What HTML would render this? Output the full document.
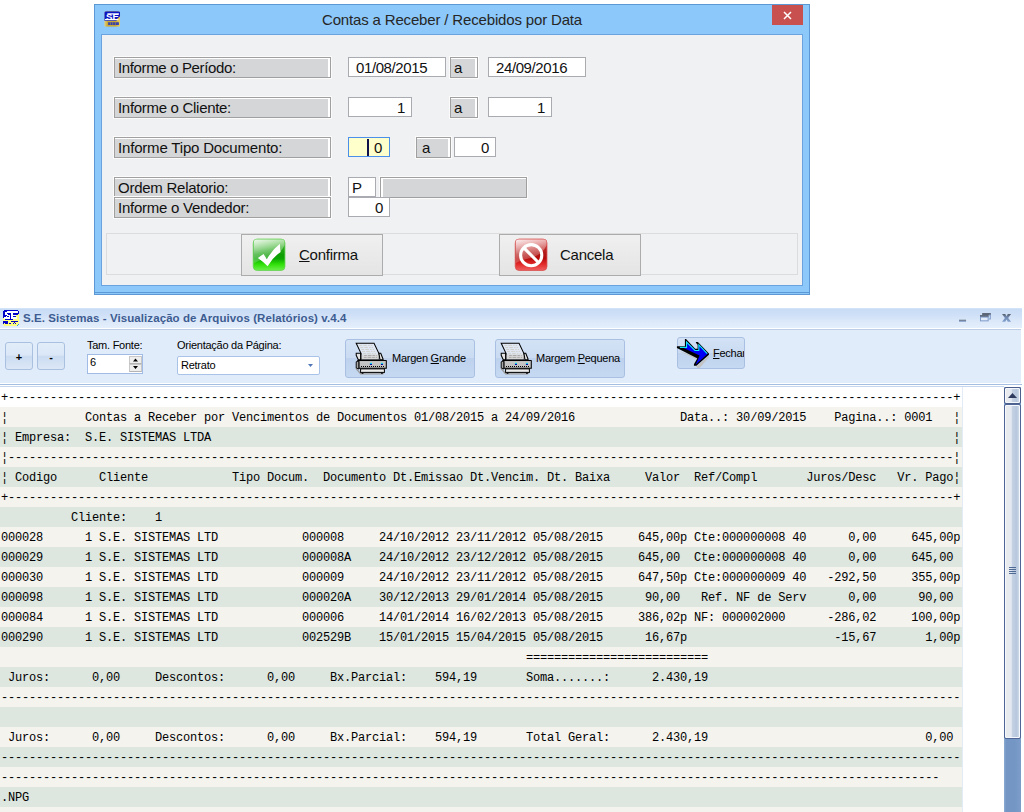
<!DOCTYPE html>
<html lang="pt-BR">
<head>
<meta charset="utf-8">
<title>Contas a Receber / Recebidos por Data</title>
<style>
html,body{margin:0;padding:0;}
body{width:1024px;height:812px;overflow:hidden;background:#fff;position:relative;font-family:"Liberation Sans",sans-serif;color:#000;}
.abs{position:absolute;box-sizing:border-box;}
/* ---------- dialog ---------- */
#dlg{left:94px;top:4px;width:716px;height:291px;background:#8cc8f9;border:1px solid #5c98d3;}
#dlgTitle{left:0;top:6px;width:714px;text-align:center;font-size:15px;line-height:18px;color:#262626;letter-spacing:-0.16px;}
#dlgClose{left:677px;top:0;width:31px;height:20px;background:#c8504f;color:#fff;}
#client{left:6px;top:29px;width:702px;height:252px;background:#f0f1f2;border:1px solid #6aa3dd;}
.lbl{letter-spacing:-0.25px;background:#d5d6d8;border:1px solid #a0a0a0;box-shadow:0 0 0 1px #fbfbfb,inset 0 1px 0 #fff,inset -2px 0 0 #fff;font-size:15px;line-height:18px;padding-left:3px;padding-top:1px;white-space:nowrap;color:#111;}
.fld{letter-spacing:-0.4px;background:#fff;border:1px solid #a9abb0;font-size:15px;line-height:18px;padding-top:1px;white-space:nowrap;color:#111;}
.fld.r{text-align:right;padding-right:6px;}
.btn{border:1px solid #acacac;background:linear-gradient(#f0f0f0,#e4e4e4);font-size:15px;color:#111;}
/* ---------- viewer ---------- */
#vtitle{left:0;top:308px;width:1022px;height:20px;background:linear-gradient(#dce9f9 0,#c8dcf5 6%,#cfe0f7 35%,#dbe8f9 65%,#e5effc 100%);}
#vtitle .t{left:23px;top:3px;font-size:11.500px;font-weight:bold;color:#3d5c91;white-space:nowrap;line-height:14px;letter-spacing:0.08px;}
#vtool{left:0;top:330px;width:1021px;height:53px;background:#e1ecfa;}
.tb2{border:1px solid #a9c0e0;border-radius:3px;background:linear-gradient(#e3edfa,#dbe7f7 46%,#cbdcf2 52%,#dce7f6);}
.tb{letter-spacing:-0.25px;border:1px solid #a9c0e2;border-radius:3px;background:linear-gradient(#d3e2f5,#cadbf2 49%,#bed2ee 50%,#c6d9f2);font-size:11px;color:#000;white-space:nowrap;}
.sm{letter-spacing:-0.25px;font-size:11px;line-height:13px;white-space:nowrap;color:#000;}
#rep{left:0;top:387px;width:962px;height:425px;overflow:hidden;font-family:"Liberation Mono",monospace;font-size:12px;letter-spacing:-0.2px;color:#000;}
#rep .r{height:20px;line-height:20px;white-space:pre;padding-left:1px;box-sizing:border-box;}
#rep .r span{position:relative;top:1px;}
#rep .w{background:#fff;}
#rep .b{background:#f4f3ee;}
#rep .g{background:#dde6df;}
</style>
</head>
<body>

<!-- ================= dialog ================= -->
<div id="dlg" class="abs">
  <svg class="abs" style="left:5px;top:2px" width="24" height="24" viewBox="0 0 812 812">
    <defs><linearGradient id="gold" x1="0" y1="0" x2="1" y2="0"><stop offset="0" stop-color="#e8d47a"/><stop offset=".2" stop-color="#c9a93a"/><stop offset=".7" stop-color="#c8a52e"/><stop offset="1" stop-color="#e6d070"/></linearGradient>
    <clipPath id="sec"><rect x="145" y="140" width="535" height="530" rx="55"/></clipPath></defs>
    <g clip-path="url(#sec)">
      <rect x="145" y="140" width="535" height="530" fill="url(#gold)"/>
      <path d="M145 140H680V315L570 405L560 465H145Z" fill="#0a16c4"/>
      <rect x="250" y="212" width="390" height="40" fill="#fff"/>
      <rect x="170" y="405" width="440" height="40" fill="#fff"/>
      <text x="205" y="438" font-family="Liberation Sans, sans-serif" font-weight="bold" font-size="318" fill="#fff" textLength="430" lengthAdjust="spacingAndGlyphs">SE</text>
      <path d="M275 515H640V605H275Z" fill="#1c2cc0" opacity=".85"/>
      <path d="M350 515V605M430 515V605M520 515V605" stroke="#c9a93a" stroke-width="18"/>
    </g>
  </svg>
  <div class="abs" style="left:-1px;top:287px;width:716px;height:1px;background:#5c98d3"></div>
  <div id="dlgTitle" class="abs">Contas a Receber / Recebidos por Data</div>
  <div id="dlgClose" class="abs">
    <svg class="abs" style="left:11px;top:6px" width="9" height="9" viewBox="0 0 9 9"><path d="M1 1L8 8M8 1L1 8" stroke="#fff" stroke-width="1.500"/></svg>
  </div>
  <div id="client" class="abs">
    <!-- coordinates below are relative to client (page x-102, y-35) -->
    <div class="abs lbl" style="left:12px;top:22px;width:217px;height:21px;letter-spacing:-0.36px">Informe o Período:</div>
    <div class="abs fld" style="left:246px;top:22px;width:98px;height:20px;padding-left:7px">01/08/2015</div>
    <div class="abs lbl" style="left:348px;top:22px;width:28px;height:21px;padding-left:3px">a</div>
    <div class="abs fld" style="left:386px;top:22px;width:98px;height:20px;padding-left:7px">24/09/2016</div>

    <div class="abs lbl" style="left:12px;top:62px;width:217px;height:21px;letter-spacing:-0.3px">Informe o Cliente:</div>
    <div class="abs fld r" style="left:246px;top:62px;width:64px;height:20px">1</div>
    <div class="abs lbl" style="left:348px;top:62px;width:28px;height:21px;padding-left:3px">a</div>
    <div class="abs fld r" style="left:386px;top:62px;width:64px;height:20px">1</div>

    <div class="abs lbl" style="left:12px;top:102px;width:217px;height:21px;letter-spacing:-0.18px">Informe Tipo Documento:</div>
    <div class="abs fld r" style="left:246px;top:102px;width:42px;height:20px;background:#ffffcc;border-color:#4a90ea;padding-right:7px"><span class="abs" style="left:18px;top:1px;width:1.500px;height:17px;background:#10104a"></span>0</div>
    <div class="abs lbl" style="left:314px;top:102px;width:35px;height:21px;padding-left:5px">a</div>
    <div class="abs fld r" style="left:352px;top:102px;width:42px;height:20px">0</div>

    <div class="abs lbl" style="left:12px;top:142px;width:217px;height:21px">Ordem Relatorio:</div>
    <div class="abs fld" style="left:246px;top:142px;width:28px;height:20px;padding-left:3px">P</div>
    <div class="abs lbl" style="left:278px;top:142px;width:147px;height:21px;box-shadow:0 0 0 1px #fbfbfb,inset 0 1px 0 #fff,inset 2px 0 0 #fff"></div>
    <div class="abs lbl" style="left:12px;top:162px;width:217px;height:21px">Informe o Vendedor:</div>
    <div class="abs fld r" style="left:246px;top:162px;width:42px;height:20px">0</div>

    <div class="abs" style="left:4px;top:198px;width:692px;height:42px;border:1px solid #dcdcdc;background:#f0f1f2"></div>
    <div class="abs btn" style="left:139px;top:199px;width:142px;height:42px">
      
      <div class="abs" style="left:57px;top:11px;line-height:18px;letter-spacing:-0.25px"><u>C</u>onfirma</div>
    </div>
    <div class="abs btn" style="left:397px;top:199px;width:142px;height:42px">
      
      <div class="abs" style="left:60px;top:11px;line-height:18px;letter-spacing:-0.25px">Cancela</div>
    </div>
  </div>
</div>

<!-- confirm icon (20.3x zoom coords, origin 249,235) -->
<svg class="abs" style="left:249px;top:235px" width="40" height="40" viewBox="0 0 812 812">
  <defs>
    <linearGradient id="gg" x1="0" y1="0" x2="0" y2="1"><stop offset="0" stop-color="#4fc03c"/><stop offset=".5" stop-color="#0e9c04"/><stop offset=".62" stop-color="#0ba503"/><stop offset=".8" stop-color="#2fe008"/><stop offset="1" stop-color="#6cf04c"/></linearGradient>
    <linearGradient id="gh" x1="0" y1="0" x2="0.350" y2="1"><stop offset="0" stop-color="#fff" stop-opacity=".92"/><stop offset=".55" stop-color="#fff" stop-opacity=".38"/><stop offset="1" stop-color="#fff" stop-opacity=".12"/></linearGradient>
    <clipPath id="ic"><rect x="92" y="88" width="632" height="626" rx="72"/></clipPath>
  </defs>
  <rect x="86" y="82" width="644" height="638" rx="80" fill="url(#gg)" stroke="#62d050" stroke-width="16"/>
  <path d="M92 88H724V210Q620 420 380 470Q200 500 92 580Z" fill="url(#gh)" clip-path="url(#ic)"/>
  <path d="M180 465L295 385Q330 440 362 492Q470 300 630 180Q625 270 642 345Q480 450 378 635Q290 540 180 465Z" fill="#fff"/>
</svg>
<!-- cancel icon (origin 511,235) -->
<svg class="abs" style="left:511px;top:235px" width="40" height="40" viewBox="0 0 812 812">
  <defs>
    <linearGradient id="rg" x1="0" y1="0" x2="0" y2="1"><stop offset="0" stop-color="#d84a4a"/><stop offset=".5" stop-color="#b01414"/><stop offset=".62" stop-color="#b80c0c"/><stop offset=".8" stop-color="#e22a2a"/><stop offset="1" stop-color="#f06060"/></linearGradient>
  </defs>
  <rect x="86" y="82" width="644" height="638" rx="80" fill="url(#rg)" stroke="#d84c4c" stroke-width="16"/>
  <path d="M92 88H724V210Q620 420 380 470Q200 500 92 580Z" fill="url(#gh)" clip-path="url(#ic)"/>
  <circle cx="410" cy="410" r="215" fill="none" stroke="#fff" stroke-width="62"/>
  <path d="M262 262L558 558" stroke="#fff" stroke-width="62"/>
</svg>
<!-- ================= viewer window ================= -->
<div id="vtitle" class="abs">
  <div class="abs t">S.E. Sistemas - Visualização de Arquivos (Relatórios) v.4.4</div>
</div>
<!-- viewer app icon (drawn in 33.83x zoom coordinates) -->
<svg class="abs" style="left:3px;top:310px" width="16" height="16" viewBox="0 0 16 16" shape-rendering="crispEdges"><rect x="1" y="0" width="14" height="1" fill="#0000c8"/><rect x="0" y="1" width="4" height="1" fill="#0000c8"/><rect x="4" y="1" width="11" height="1" fill="#ffffff"/><rect x="15" y="1" width="1" height="1" fill="#0000c8"/><rect x="0" y="2" width="2" height="1" fill="#0000c8"/><rect x="2" y="2" width="13" height="1" fill="#ffffff"/><rect x="15" y="2" width="1" height="1" fill="#0000c8"/><rect x="0" y="3" width="2" height="1" fill="#0000c8"/><rect x="2" y="3" width="2" height="1" fill="#ffffff"/><rect x="4" y="3" width="4" height="1" fill="#0000c8"/><rect x="8" y="3" width="2" height="1" fill="#ffffff"/><rect x="10" y="3" width="6" height="1" fill="#0000c8"/><rect x="0" y="4" width="2" height="1" fill="#0000c8"/><rect x="2" y="4" width="3" height="1" fill="#ffffff"/><rect x="5" y="4" width="3" height="1" fill="#0000c8"/><rect x="8" y="4" width="2" height="1" fill="#ffffff"/><rect x="10" y="4" width="5" height="1" fill="#0000c8"/><rect x="15" y="4" width="1" height="1" fill="#ffff80"/><rect x="0" y="5" width="4" height="1" fill="#0000c8"/><rect x="4" y="5" width="3" height="1" fill="#ffffff"/><rect x="7" y="5" width="1" height="1" fill="#0000c8"/><rect x="8" y="5" width="5" height="1" fill="#ffffff"/><rect x="13" y="5" width="3" height="1" fill="#ffff80"/><rect x="0" y="6" width="3" height="1" fill="#0000c8"/><rect x="3" y="6" width="1" height="1" fill="#ffffff"/><rect x="4" y="6" width="2" height="1" fill="#0000c8"/><rect x="6" y="6" width="1" height="1" fill="#ffffff"/><rect x="7" y="6" width="1" height="1" fill="#0000c8"/><rect x="8" y="6" width="2" height="1" fill="#ffffff"/><rect x="10" y="6" width="3" height="1" fill="#0000c8"/><rect x="13" y="6" width="3" height="1" fill="#ffff80"/><rect x="0" y="7" width="1" height="1" fill="#0000c8"/><rect x="1" y="7" width="6" height="1" fill="#ffffff"/><rect x="7" y="7" width="1" height="1" fill="#0000c8"/><rect x="8" y="7" width="6" height="1" fill="#ffffff"/><rect x="14" y="7" width="2" height="1" fill="#ffff80"/><rect x="0" y="8" width="1" height="1" fill="#ffff80"/><rect x="1" y="8" width="6" height="1" fill="#ffffff"/><rect x="7" y="8" width="1" height="1" fill="#0000c8"/><rect x="8" y="8" width="6" height="1" fill="#ffffff"/><rect x="14" y="8" width="2" height="1" fill="#ffff80"/><rect x="0" y="9" width="2" height="1" fill="#ffff80"/><rect x="2" y="9" width="8" height="1" fill="#0000c8"/><rect x="10" y="9" width="6" height="1" fill="#ffff80"/><rect x="0" y="10" width="16" height="1" fill="#ffff80"/><rect x="0" y="11" width="5" height="1" fill="#0000c8"/><rect x="5" y="11" width="3" height="1" fill="#ffff80"/><rect x="8" y="11" width="7" height="1" fill="#0000c8"/><rect x="15" y="11" width="1" height="1" fill="#ffff80"/><rect x="0" y="12" width="5" height="1" fill="#0000c8"/><rect x="5" y="12" width="6" height="1" fill="#ffff80"/><rect x="11" y="12" width="1" height="1" fill="#0000c8"/><rect x="12" y="12" width="4" height="1" fill="#ffff80"/><rect x="0" y="13" width="1" height="1" fill="#0000c8"/><rect x="1" y="13" width="1" height="1" fill="#ffff80"/><rect x="2" y="13" width="3" height="1" fill="#0000c8"/><rect x="5" y="13" width="1" height="1" fill="#ffff80"/><rect x="6" y="13" width="2" height="1" fill="#0000c8"/><rect x="8" y="13" width="2" height="1" fill="#ffff80"/><rect x="10" y="13" width="1" height="1" fill="#0000c8"/><rect x="11" y="13" width="1" height="1" fill="#ffff80"/><rect x="12" y="13" width="1" height="1" fill="#0000c8"/><rect x="13" y="13" width="3" height="1" fill="#ffff80"/><rect x="0" y="14" width="15" height="1" fill="#ffff80"/><rect x="15" y="14" width="1" height="1" fill="#3a9ad8"/><rect x="1" y="15" width="13" height="1" fill="#ffff80"/><rect x="14" y="15" width="1" height="1" fill="#3a9ad8"/></svg>
<!-- caption buttons (13.84x zoom coords, origin 950,304) -->
<svg class="abs" style="left:950px;top:304px" width="74" height="30" viewBox="0 0 1024 415">
  <rect x="125" y="218" width="97" height="14" fill="#59606e"/><rect x="125" y="232" width="97" height="14" fill="#7f9cc9"/>
  <rect x="445" y="125" width="120" height="28" fill="#5b6475"/><path d="M538 153H558V208H538" fill="none" stroke="#7f9cc9" stroke-width="14"/>
  <rect x="415" y="153" width="120" height="28" fill="#5b6475"/><rect x="422" y="181" width="106" height="52" fill="#e3ecfa" stroke="#7f9cc9" stroke-width="14"/>
  <defs><linearGradient id="xg" x1="0" y1="0" x2="0" y2="1"><stop offset="0" stop-color="#5a606c"/><stop offset=".35" stop-color="#6f86ad"/><stop offset="1" stop-color="#84a2cf"/></linearGradient></defs>
  <path d="M720 140H765L782 170L800 140H845L805 192L845 245H800L782 215L765 245H720L760 192Z" fill="url(#xg)"/>
</svg>
<div class="abs" style="left:0;top:328px;width:1022px;height:1px;background:#fff"></div>
<div class="abs" style="left:0;top:329px;width:1021px;height:1px;background:#bccde6"></div>
<div id="vtool" class="abs"></div>
<div class="abs tb2" style="left:5px;top:342px;width:28px;height:28px;text-align:center;font-size:11px;font-weight:bold;line-height:28px">+</div>
<div class="abs tb2" style="left:37px;top:342px;width:28px;height:28px;text-align:center;font-size:11px;font-weight:bold;line-height:28px">-</div>
<div class="abs sm" style="left:87px;top:339px">Tam. Fonte:</div>
<div class="abs" style="left:87px;top:354px;width:56px;height:20px;background:#fff;border:1px solid #9fbbe6">
  <div class="abs sm" style="left:2px;top:1px">6</div>
  <div class="abs" style="left:41px;top:1px;width:13px;height:8px;background:#eeeeee;border:1px solid #c8c8c8;border-bottom-color:#b4b4b4"></div>
  <div class="abs" style="left:41px;top:9px;width:13px;height:8px;background:#eeeeee;border:1px solid #c8c8c8;border-bottom-color:#b4b4b4"></div>
  <svg class="abs" style="left:45px;top:3px" width="5" height="12" viewBox="0 0 5 12"><path d="M0 3.500L2.500 .500L5 3.500ZM0 8L2.500 11L5 8Z" fill="#000"/></svg>
</div>
<div class="abs sm" style="left:177px;top:339px">Orientação da Página:</div>
<div class="abs" style="left:177px;top:356px;width:143px;height:19px;background:#fff;border:1px solid #a9c3e8;border-radius:2px">
  <div class="abs sm" style="left:3px;top:2px">Retrato</div>
  <svg class="abs" style="left:130px;top:7px" width="5" height="3" viewBox="0 0 5 3"><path d="M0 0H5L2.500 3Z" fill="#4f77b8"/></svg>
</div>

<div class="abs tb" style="left:345px;top:339px;width:130px;height:39px">
  <div class="abs" style="left:46px;top:12px;line-height:13px">Margen <u>G</u>rande</div>
</div>
<div class="abs tb" style="left:495px;top:339px;width:130px;height:39px">
  <div class="abs" style="left:40px;top:12px;line-height:13px">Margem <u>P</u>equena</div>
</div>
<div class="abs tb" style="left:677px;top:337px;width:68px;height:32px;overflow:hidden">
  <div class="abs" style="left:35px;top:9px;line-height:13px"><u>F</u>echar</div>
</div>
<!-- printer icons (19.34x zoom coords) -->
<svg class="abs" style="left:350px;top:338px" width="44" height="42" viewBox="0 0 851 812">
<path d="M100 590L200 705H640L665 680H215L130 585Z" fill="#9a9a9a"/>
      <path d="M120 100H465L560 300V410H215V300Z" fill="#dfe8f4" stroke="#000" stroke-width="20" stroke-linejoin="miter"/>
      <path d="M225 320H555V410H225Z" fill="#d6d6d6"/>
      <path d="M180 143H430M200 183H445M220 222H465M235 260H485M255 298H500" stroke="#c9c3b3" stroke-width="12" stroke-dasharray="55 22 70 22 30 22"/>
      <path d="M275 338H520M270 376H525" stroke="#8f8f8f" stroke-width="12" stroke-dasharray="50 20 70 20"/>
      <path d="M120 295H205V420H160L120 335Z" fill="#e4e4e4" stroke="#000" stroke-width="20"/>
      <path d="M560 295H595L640 410V420H580Z" fill="#e4e4e4" stroke="#000" stroke-width="20"/>
      <path d="M120 460L175 440V600L120 580Z" fill="#a8a8a8" stroke="#000" stroke-width="18"/>
      <rect x="175" y="440" width="527" height="145" fill="#c3c3c3" stroke="#000" stroke-width="20"/>
      <rect x="140" y="425" width="560" height="22" fill="#000"/>
      <rect x="185" y="452" width="505" height="14" fill="#e9e9e9"/>
      <rect x="385" y="480" width="40" height="21" fill="#00e0f0"/><rect x="385" y="501" width="40" height="20" fill="#0000a0"/>
      <rect x="598" y="480" width="40" height="21" fill="#00e0f0"/><rect x="598" y="501" width="40" height="20" fill="#0000a0"/>
      <path d="M212 550H660" stroke="#000" stroke-width="22" stroke-dasharray="20 18.700"/>
      <rect x="205" y="597" width="460" height="68" fill="#f4f4f4" stroke="#000" stroke-width="20"/>
      <rect x="215" y="635" width="440" height="18" fill="#c8c8c8"/>
      <rect x="225" y="672" width="35" height="20" fill="#000"/><rect x="600" y="672" width="35" height="20" fill="#000"/>
</svg>
<svg class="abs" style="left:495px;top:338px" width="44" height="42" viewBox="0 0 851 812">
<path d="M100 590L200 705H640L665 680H215L130 585Z" fill="#9a9a9a"/>
      <path d="M120 100H465L560 300V410H215V300Z" fill="#dfe8f4" stroke="#000" stroke-width="20" stroke-linejoin="miter"/>
      <path d="M225 320H555V410H225Z" fill="#d6d6d6"/>
      <path d="M180 143H430M200 183H445M220 222H465M235 260H485M255 298H500" stroke="#c9c3b3" stroke-width="12" stroke-dasharray="55 22 70 22 30 22"/>
      <path d="M275 338H520M270 376H525" stroke="#8f8f8f" stroke-width="12" stroke-dasharray="50 20 70 20"/>
      <path d="M120 295H205V420H160L120 335Z" fill="#e4e4e4" stroke="#000" stroke-width="20"/>
      <path d="M560 295H595L640 410V420H580Z" fill="#e4e4e4" stroke="#000" stroke-width="20"/>
      <path d="M120 460L175 440V600L120 580Z" fill="#a8a8a8" stroke="#000" stroke-width="18"/>
      <rect x="175" y="440" width="527" height="145" fill="#c3c3c3" stroke="#000" stroke-width="20"/>
      <rect x="140" y="425" width="560" height="22" fill="#000"/>
      <rect x="185" y="452" width="505" height="14" fill="#e9e9e9"/>
      <rect x="385" y="480" width="40" height="21" fill="#00e0f0"/><rect x="385" y="501" width="40" height="20" fill="#0000a0"/>
      <rect x="598" y="480" width="40" height="21" fill="#00e0f0"/><rect x="598" y="501" width="40" height="20" fill="#0000a0"/>
      <path d="M212 550H660" stroke="#000" stroke-width="22" stroke-dasharray="20 18.700"/>
      <rect x="205" y="597" width="460" height="68" fill="#f4f4f4" stroke="#000" stroke-width="20"/>
      <rect x="215" y="635" width="440" height="18" fill="#c8c8c8"/>
      <rect x="225" y="672" width="35" height="20" fill="#000"/><rect x="600" y="672" width="35" height="20" fill="#000"/>
</svg>
<!-- arrow icon (20.3x zoom coords, origin 672,334) -->
<svg class="abs" style="left:672px;top:334px" width="44" height="40" viewBox="0 0 893 812">
  <path d="M125 340L505 515L520 560L480 640L520 690L560 690L750 470L740 440L520 640L560 480Z" fill="#c3c3c3"/>
  <path d="M100 250H262V100H285L470 300H520V220L485 180V160H525L750 395V420L495 645H445V615L510 500V490L100 285Z" fill="#000"/>
  <path d="M150 262H290V150L470 325H545V215L725 402L480 625L560 435L205 268Z" fill="#0000f5"/>
  <path d="M160 272H295V165L465 335H545V222L715 400" fill="none" stroke="#12eaf8" stroke-width="22"/>
</svg>
<div class="abs" style="left:0;top:384px;width:1022px;height:1px;background:#a5bfe3"></div>
<div class="abs" style="left:0;top:386px;width:1004px;height:1px;background:#c5d6ee"></div>



<!-- ================= report ================= -->
<div id="rep" class="abs">
<div class="r w"><span>+---------------------------------------------------------------------------------------------------------------------------------------+</span></div>
<div class="r b"><span>¦           Contas a Receber por Vencimentos de Documentos 01/08/2015 a 24/09/2016               Data..: 30/09/2015    Pagina..: 0001   ¦</span></div>
<div class="r g"><span>¦ Empresa:  S.E. SISTEMAS LTDA                                                                                                          ¦</span></div>
<div class="r b"><span>¦---------------------------------------------------------------------------------------------------------------------------------------¦</span></div>
<div class="r g"><span>¦ Codigo      Cliente            Tipo Docum.  Documento Dt.Emissao Dt.Vencim. Dt. Baixa     Valor  Ref/Compl       Juros/Desc   Vr. Pago¦</span></div>
<div class="r b"><span>+---------------------------------------------------------------------------------------------------------------------------------------+</span></div>
<div class="r g"><span>          Cliente:    1</span></div>
<div class="r b"><span>000028      1 S.E. SISTEMAS LTD            000008     24/10/2012 23/11/2012 05/08/2015     645,00p Cte:000000008 40      0,00     645,00p</span></div>
<div class="r g"><span>000029      1 S.E. SISTEMAS LTD            000008A    24/10/2012 23/12/2012 05/08/2015     645,00  Cte:000000008 40      0,00     645,00</span></div>
<div class="r b"><span>000030      1 S.E. SISTEMAS LTD            000009     24/10/2012 23/11/2012 05/08/2015     647,50p Cte:000000009 40   -292,50     355,00p</span></div>
<div class="r g"><span>000098      1 S.E. SISTEMAS LTD            000020A    30/12/2013 29/01/2014 05/08/2015      90,00   Ref. NF de Serv      0,00      90,00</span></div>
<div class="r b"><span>000084      1 S.E. SISTEMAS LTD            000006     14/01/2014 16/02/2013 05/08/2015     386,02p NF: 000002000      -286,02     100,00p</span></div>
<div class="r g"><span>000290      1 S.E. SISTEMAS LTD            002529B    15/01/2015 15/04/2015 05/08/2015      16,67p                     -15,67       1,00p</span></div>
<div class="r b"><span>                                                                           ==========================</span></div>
<div class="r g"><span> Juros:      0,00     Descontos:      0,00     Bx.Parcial:    594,19       Soma.......:      2.430,19</span></div>
<div class="r b"><span>-----------------------------------------------------------------------------------------------------------------------------------------</span></div>
<div class="r g"><span>&nbsp;</span></div>
<div class="r b"><span> Juros:      0,00     Descontos:      0,00     Bx.Parcial:    594,19       Total Geral:      2.430,19                               0,00</span></div>
<div class="r g"><span>-----------------------------------------------------------------------------------------------------------------------------------------</span></div>
<div class="r b"><span>--------------------------------------------------------------------------------------------------------------------------------------</span></div>
<div class="r g"><span>.NPG</span></div>
<div class="r b"><span>&nbsp;</span></div>
</div>
<div class="abs" style="left:962px;top:387px;width:1px;height:425px;background:#e3ebf7"></div>

<!-- scrollbar -->
<div class="abs" style="left:1004px;top:387px;width:17px;height:425px;background:linear-gradient(90deg,#8eadd4,#7396c4 12%,#7396c4 60%,#7d9dc9)"></div>
<div class="abs" style="left:1004px;top:387px;width:17px;height:17px;border:1px solid #4a5f8c;border-radius:2px;box-shadow:inset 0 0 0 1px #f4f7fb;background:linear-gradient(90deg,#ececec,#e3e9f2 42%,#c6d2e3 48%,#b7c7dd 78%,#dae3ee)">
  <svg class="abs" style="left:3px;top:5px" width="9" height="5" viewBox="0 0 9 5"><path d="M0 5L4.500 0L9 5Z" fill="#2e3a5e"/></svg>
</div>
<div class="abs" style="left:1004px;top:404px;width:17px;height:335px;border:1px solid #4f6597;border-radius:2px;box-shadow:inset 0 0 0 1px #f4f7fb;background:linear-gradient(90deg,#ececec,#e3e9f2 42%,#c6d2e3 48%,#b7c7dd 78%,#dae3ee)">
  <div class="abs" style="left:4px;top:162px;width:7px;height:1px;background:#4f6a94;box-shadow:0 2px 0 #4f6a94,0 4px 0 #4f6a94,0 6px 0 #4f6a94"></div>
</div>

</body>
</html>
